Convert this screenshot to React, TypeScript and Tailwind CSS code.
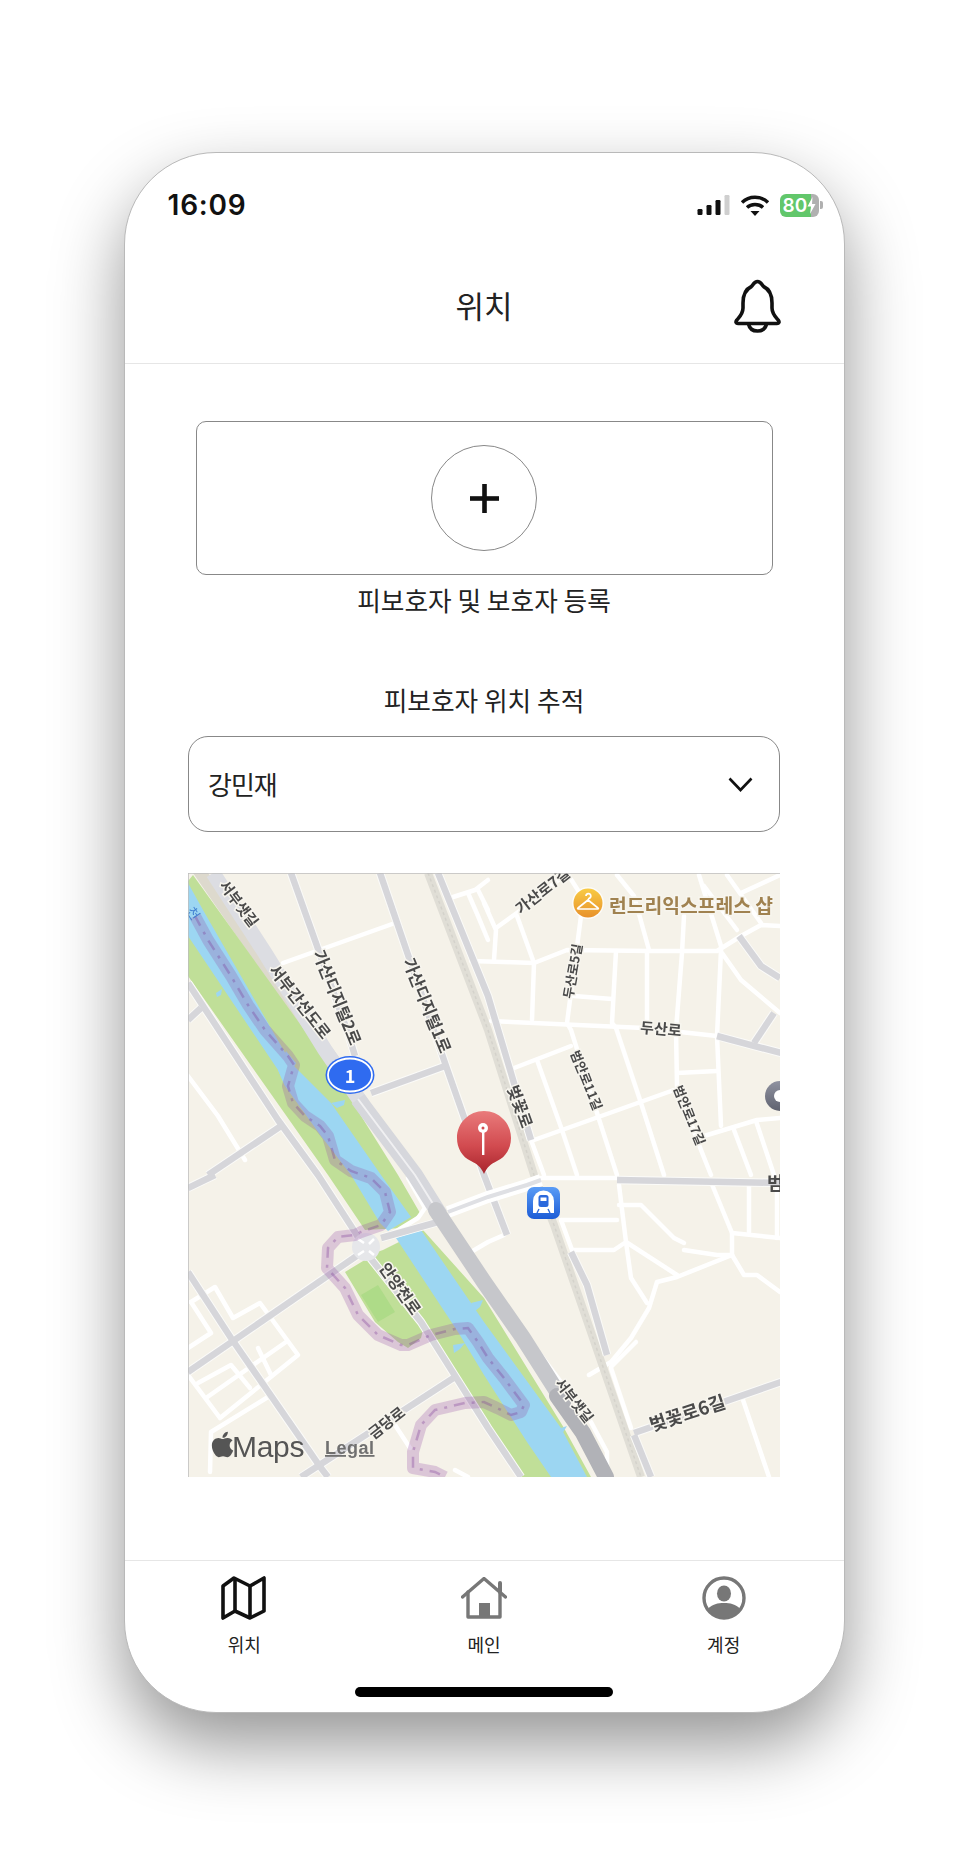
import React from "react";
import { FaApple } from "react-icons/fa";

type P = number[][];
const pts = (p: P) => p.map((a) => a.join(",")).join(" ");

const whites: P[] = [
  [[95,90],[207,50]],
  [[0,203],[30,243],[57,287]],
  [[262,25],[287,17],[300,7]],
  [[280,20],[290,43],[300,67]],
  [[290,17],[300,37]],
  [[283,88],[346,90],[379,77],[463,78],[529,78],[553,63],[573,52],[592,53]],
  [[296,30],[308,57],[306,87]],
  [[308,55],[333,37],[379,0]],
  [[329,43],[346,90],[344,147]],
  [[379,0],[393,22],[393,43],[379,150],[383,157],[409,240],[429,302]],
  [[386,123],[424,126]],
  [[428,78],[424,150],[428,155],[453,230],[476,302]],
  [[459,78],[459,150]],
  [[496,43],[494,80],[488,157],[489,213],[513,277],[523,302]],
  [[533,77],[529,163],[533,253]],
  [[429,2],[446,23],[461,77]],
  [[511,2],[533,73]],
  [[539,2],[573,50]],
  [[516,13],[549,57]],
  [[553,20],[592,2]],
  [[534,80],[553,107],[592,140]],
  [[303,148],[456,155],[529,163]],
  [[321,197],[383,173]],
  [[349,187],[374,257],[389,302]],
  [[346,267],[486,217]],
  [[489,200],[529,198]],
  [[516,263],[569,247],[592,245]],
  [[546,257],[563,302]],
  [[568,248],[586,302]],
  [[283,379],[300,369],[316,362]],
  [[373,347],[429,347]],
  [[373,347],[384,377]],
  [[343,267],[356,302]],
  [[384,377],[426,377],[438,369],[431,312]],
  [[431,332],[453,332],[486,365],[496,370]],
  [[496,377],[529,382],[544,382]],
  [[438,369],[489,402]],
  [[438,369],[443,405],[459,430]],
  [[544,382],[489,404],[469,409],[461,435],[443,465],[423,489],[401,502]],
  [[448,469],[423,494]],
  [[523,309],[544,360],[544,382]],
  [[561,309],[561,359]],
  [[589,312],[589,365]],
  [[544,360],[592,365]],
  [[544,382],[556,402],[569,402],[592,419]],
  [[554,524],[581,604]],
  [[343,469],[403,549],[419,579],[419,595]],
  [[3,429],[27,414],[45,445],[72,430],[110,482],[32,545],[0,502]],
  [[3,429],[23,460],[0,475]],
  [[10,510],[43,492],[62,515]],
  [[18,525],[98,469]],
  [[70,475],[83,502]],
  [[22,599],[23,559],[80,524]],
  [[207,552],[222,575]],
  [[267,597],[280,604]],
  [[197,365],[230,345],[237,335],[220,305]],
  [[423,495],[443,555]],
  [[353,305],[429,305]],
];

const grays: P[] = [
  [[103,0],[160,160],[167,183]],
  [[192,0],[257,190],[277,247],[296,302],[319,362]],
  [[250,0],[300,123],[343,267]],
  [[383,379],[399,412],[419,482]],
  [[446,562],[463,604]],
  [[0,110],[90,247],[130,302],[167,359],[180,382],[233,449],[300,555],[333,604]],
  [[0,147],[13,135]],
  [[20,302],[93,253]],
  [[0,315],[27,302]],
  [[183,220],[257,193]],
  [[0,499],[170,382]],
  [[0,399],[43,465],[133,595],[140,604]],
  [[113,604],[267,504]],
  [[193,365],[250,349]],
  [[429,307],[593,310]],
  [[446,560],[593,509]],
  [[529,163],[593,180]],
  [[566,170],[586,140]],
  [[551,63],[573,93],[592,105]],
];

const route: P = [[7,43],[20,67],[43,103],[60,132],[77,157],[100,183],[106,192],[100,213],[105,230],[117,243],[132,253],[140,263],[147,287],[163,298],[183,305],[197,319],[202,339],[193,352],[173,359],[167,362],[150,364],[140,375],[139,395],[157,415],[170,442],[190,462],[213,472],[220,472],[243,462],[267,456],[280,455],[290,469],[300,485],[316,505],[336,532],[333,539],[323,542],[309,535],[296,529],[277,530],[247,537],[233,552],[225,579],[225,595],[247,599],[257,604]];

const labels: [string, number, number, number, number][] = [
  ["서부샛길", 52, 30, 53, 14.5],
  ["서부간선도로", 113, 128, 52, 16],
  ["가산디지털2로", 150, 124, 68, 16.5],
  ["가산디지털1로", 240, 132, 68, 16.5],
  ["벚꽃로", 333, 233, 70, 16],
  ["가산로7길", 354, 17, -38, 15],
  ["두산로5길", 384, 98, -80, 13],
  ["두산로", 473, 155, 5, 15],
  ["범안로11길", 399, 207, 68, 13],
  ["범안로17길", 502, 242, 68, 13],
  ["안양천로", 213, 415, 55, 16],
  ["금당로", 198, 549, -38, 15],
  ["서부샛길", 387, 527, 52, 14],
  ["벚꽃로6길", 499, 539, -18, 18.5],
];

function MapView() {
  return (
    <svg viewBox="0 0 592 604" className="block w-[592px] h-[604px] blur-[0.6px]">
      <defs>
        <linearGradient id="pin" x1="0" y1="0" x2="0" y2="1">
          <stop offset="0" stopColor="#e97b7b" />
          <stop offset="0.55" stopColor="#d24b50" />
          <stop offset="1" stopColor="#a8242c" />
        </linearGradient>
        <linearGradient id="metro" x1="0" y1="0" x2="0" y2="1">
          <stop offset="0" stopColor="#5a9cf6" />
          <stop offset="1" stopColor="#1c5cd6" />
        </linearGradient>
        <linearGradient id="hanger" x1="0" y1="0" x2="0" y2="1">
          <stop offset="0" stopColor="#f8cb45" />
          <stop offset="1" stopColor="#e8912b" />
        </linearGradient>
        <linearGradient id="poi" x1="0" y1="0" x2="0" y2="1">
          <stop offset="0" stopColor="#8f92a0" />
          <stop offset="1" stopColor="#5f6270" />
        </linearGradient>
      </defs>
      <rect width="592" height="604" fill="#f5f2e9" />
      <polygon points="20,0 5,0 95,130 130,185 155,190" fill="#ddd9cd" />
      <polygon points="0,8 5,2 140,190 210,302 232,340 215,355 177,357 140,302 0,103" fill="#c0df98" />
      <polygon points="195,377 235,357 296,425 376,555 403,604 333,604 300,552 230,445 180,382" fill="#c0df98" />
      <polygon points="157,399 180,385 230,445 237,449 233,465 220,475 210,469 187,449" fill="#c0df98" />
      <polygon points="173,422 190,412 207,439 190,449" fill="#aedb88" />
      <polygon points="0,10 15,37 103,190 143,230 193,302 223,344 200,358 192,350 163,302 133,263 97,213 90,197 0,63" fill="#9cd6f2" />
      <polygon points="208,365 233,357 296,449 373,555 399,604 363,604 339,569 296,502 270,459" fill="#9cd6f2" />
      <polygon points="90,197 98,178 108,190 97,213" fill="#9cd6f2" />
      <polygon points="28,120 34,116 33,122 29,124" fill="#9cd6f2" />
      <polygon points="143,230 157,227 156,232 149,235" fill="#9cd6f2" />
      <polygon points="283,430 295,427 292,434 287,438" fill="#9cd6f2" />
      <polygon points="265,472 277,470 272,476 266,480" fill="#9cd6f2" />
      <polygon points="373,555 379,553 374,561" fill="#9cd6f2" />
      {whites.map((p, i) => (
        <polyline key={i} points={pts(p)} fill="none" stroke="#ffffff" strokeWidth="4.5" strokeLinejoin="round" strokeLinecap="round" />
      ))}
      <polyline points="240,0 300,157 346,302 366,352 453,604" fill="none" stroke="#e0ded6" strokeWidth="8" />
      <polyline points="240,0 300,157 346,302 366,352 453,604" fill="none" stroke="#d4d2cb" strokeWidth="1.5" strokeDasharray="3 3" />
      {grays.map((p, i) => (
        <polyline key={"c" + i} points={pts(p)} fill="none" stroke="#fbfbf9" strokeWidth="8.5" strokeLinejoin="round" />
      ))}
      {grays.map((p, i) => (
        <polyline key={i} points={pts(p)} fill="none" stroke="#d6d6da" strokeWidth="6.5" strokeLinejoin="round" strokeLinecap="butt" />
      ))}
      <polyline points="25,0 77,80 137,177 175,232" fill="none" stroke="#dcdde2" strokeWidth="15" />
      <polyline points="170,226 227,302 252,342" fill="none" stroke="#d6d7dc" strokeWidth="16" />
      <polyline points="170,226 227,302 252,342" fill="none" stroke="#f0f0f2" strokeWidth="2" />
      <polyline points="260,339 300,324 339,312 353,307" fill="none" stroke="#ffffff" strokeWidth="12" />
      <polyline points="260,339 300,324 339,312 353,307" fill="none" stroke="#dfe0e4" strokeWidth="4" />
      <polyline points="248,337 296,409 335,465 370,520" fill="none" stroke="#c6c7cb" strokeWidth="16" strokeLinecap="round" />
      <polyline points="369,523 395,560 418,604" fill="none" stroke="#b1b2b7" strokeWidth="16" strokeLinecap="round" />
      <circle cx="178" cy="374" r="14" fill="#e6e7ea" />
      <path d="M170 366 L176 370 M186 366 L181 371 M170 382 L176 378 M186 382 L181 378" stroke="#ffffff" strokeWidth="2.5" />
      <polyline points={pts(route)} fill="none" stroke="rgba(150,80,165,0.27)" strokeWidth="12" strokeLinejoin="round" />
      <polyline points={pts(route)} fill="none" stroke="rgba(125,55,150,0.32)" strokeWidth="2.5" strokeDasharray="11 7 3 7" />
      {labels.map(([t, x, y, r, s], i) => (
        <text
          key={i}
          transform={`translate(${x} ${y}) rotate(${r})`}
          textAnchor="middle"
          dominantBaseline="central"
          fontSize={s}
          fontWeight={600}
          fill="#4a4a4a"
          stroke="#f7f5ee"
          strokeWidth="3"
          paintOrder="stroke"
        >
          {t}
        </text>
      ))}
      <text transform="translate(6 40) rotate(55)" textAnchor="middle" dominantBaseline="central" fontSize="13" fill="#3f7fd0">천</text>
      <text x="421" y="32" dominantBaseline="central" fontSize="19.3" fontWeight={600} fill="#a08250" stroke="#f7f5ee" strokeWidth="3" paintOrder="stroke">런드리익스프레스 샵</text>
      <text x="579" y="309" dominantBaseline="central" fontSize="18" fontWeight={600} fill="#4a4a4a">범</text>

      <ellipse cx="162" cy="202" rx="24.5" ry="19" fill="#2f6bf0" />
      <ellipse cx="162" cy="202" rx="22" ry="16.5" fill="none" stroke="#ffffff" strokeWidth="1.8" />
      <text x="162" y="202" textAnchor="middle" dominantBaseline="central" fontSize="18" fontWeight={700} fill="#ffffff">1</text>

      <circle cx="400" cy="30" r="16" fill="#fff" opacity="0.7" />
      <circle cx="400" cy="30" r="14.5" fill="url(#hanger)" />
      <path d="M398 23 a2.4 2.4 0 1 1 3 2.4 L400 27 L410 35 Q411 36 409 36 L391 36 Q389 36 390 35 L400 27" fill="none" stroke="#fff" strokeWidth="1.7" strokeLinejoin="round" />

      <circle cx="592" cy="223" r="15" fill="url(#poi)" />
      <circle cx="592" cy="223" r="6" fill="#fff" />

      <rect x="339" y="314" width="33" height="32" rx="7" fill="url(#metro)" />
      <path d="M345 340 L345 328 A10.5 10.5 0 0 1 366 328 L366 340 L361 340 L350 340 Z" fill="#fff" />
      <rect x="350.5" y="322" width="10" height="12" rx="2.5" fill="#2a68dc" />
      <rect x="352.5" y="324.5" width="6" height="3.5" fill="#fff" />
      <path d="M351 336 L349 340 M360 336 L362 340" stroke="#2a68dc" strokeWidth="1.4" />

      <path d="M296 301 C293 294 289 291 283 288 C274 284 269 275 269 265 C269 250 281 238 296 238 C311 238 323 250 323 265 C323 275 318 284 309 288 C303 291 299 294 296 301 Z" fill="url(#pin)" />
      <circle cx="295" cy="255" r="5" fill="#fff" />
      <rect x="294" y="255" width="2.4" height="27" fill="#fff" />
      <circle cx="295" cy="255" r="1.5" fill="#d24b50" />

      <FaApple x={20} y={557} size={29} color="#555555" />
      <text x="44" y="584" fontSize="30" letterSpacing="-0.3" fill="#555555" style={{ fontFamily: "'Liberation Sans', sans-serif" }}>Maps</text>
      <text x="137" y="581" fontSize="18" letterSpacing="0.5" fontWeight={700} fill="#707070" textDecoration="underline" style={{ fontFamily: "'Liberation Sans', sans-serif" }}>Legal</text>
      <line x1="0" y1="0" x2="592" y2="0" stroke="#bdbdbd" strokeWidth="1.5" />
      <line x1="0" y1="0" x2="0" y2="604" stroke="#bdbdbd" strokeWidth="1.5" />
    </svg>
  );
}

function Tab({ label, children }: { label: string; children: React.ReactNode }) {
  return (
    <div className="flex flex-col items-center">
      <div className="h-[42px] flex items-center justify-center">{children}</div>
      <span className="mt-[13px] text-[18px] leading-[24px] text-[#222]">{label}</span>
    </div>
  );
}

export default function App() {
  return (
    <div className="w-[968px] h-[1872px] bg-white pt-[152px] flex justify-center font-['Noto_Sans_CJK_KR','Noto_Sans',sans-serif]">
      <div className="w-[721px] h-[1561px] rounded-[92px] bg-white border border-[#b9b9b9] shadow-[0_32px_70px_rgba(0,0,0,0.42)] flex flex-col overflow-hidden">
        <div className="h-[96px] pt-[37px] pl-[43px] pr-[21px] flex items-start justify-between">
          <span className="text-[28px] leading-[30px] font-semibold tracking-[0.8px] text-[#111] font-['Inter',sans-serif]">16:09</span>
          <div className="flex items-center h-[30px]">
            <svg width="33" height="20" viewBox="0 0 33 20">
              <rect x="0.5" y="14" width="5" height="6" rx="1.2" fill="#111" />
              <rect x="9.5" y="10" width="5" height="10" rx="1.2" fill="#111" />
              <rect x="18.5" y="5" width="5" height="15" rx="1.2" fill="#111" />
              <rect x="27.5" y="0" width="5" height="20" rx="1.2" fill="#cfcfcf" />
            </svg>
            <svg className="ml-[10px]" width="30" height="22" viewBox="0 0 30 22" fill="none">
              <path d="M2 8.5 C9 1.5 21 1.5 28 8.5" stroke="#111" strokeWidth="3.4" />
              <path d="M7 13.5 C11 9.5 19 9.5 23 13.5" stroke="#111" strokeWidth="3.4" />
              <polygon points="10.5,17 19.5,17 15,22" fill="#111" />
            </svg>
            <div className="ml-[10px] w-[39px] h-[23px] rounded-[6px] bg-[linear-gradient(90deg,#62c76b_80%,#b0b0b0_80%)] flex items-center pl-[3px]">
              <span className="text-[19px] leading-[23px] font-semibold text-white font-['Inter',sans-serif]">80</span>
              <svg width="9" height="17" viewBox="0 0 9 17">
                <polygon points="5.5,0 0.5,9.5 4,9.5 3,17 8.5,7 5,7" fill="#fff" />
              </svg>
            </div>
            <div className="ml-[1px] w-[3px] h-[8px] rounded-r-[2px] bg-[#b0b0b0]" />
          </div>
        </div>

        <div className="h-[115px] border-b border-[#e6e6e6] grid grid-cols-[1fr_auto_1fr] items-center px-[63px]">
          <div />
          <span className="text-[31px] leading-[40px] text-[#222] mb-[3px]">위치</span>
          <div className="flex justify-end">
            <svg width="47" height="54" viewBox="0 0 47 54" fill="none" stroke="#111" strokeWidth="3.6" strokeLinejoin="round" strokeLinecap="round">
              <path d="M23.5 2.5 C20.5 2.5 19.5 5 17.5 7.5 C11 10.5 9 17 9 24 L9 29 C9 35 5 38.5 2.5 41.5 C1.5 43 2 44.5 4 44.5 L43 44.5 C45 44.5 45.5 43 44.5 41.5 C42 38.5 38 35 38 29 L38 24 C38 17 36 10.5 29.5 7.5 C27.5 5 26.5 2.5 23.5 2.5 Z" />
              <path d="M14.5 45 C15.5 49.5 19 52 23.5 52 C28 52 31.5 49.5 32.5 45" />
            </svg>
          </div>
        </div>

        <div className="flex-1 flex flex-col items-center pt-[57px]">
          <div className="w-[577px] h-[154px] rounded-[10px] border border-[#888] flex items-center justify-center">
            <div className="w-[106px] h-[106px] rounded-full border border-[#888] flex items-center justify-center">
              <svg width="29" height="29" viewBox="0 0 29 29">
                <rect x="0" y="12.2" width="29" height="4.6" fill="#111" />
                <rect x="12.2" y="0" width="4.6" height="29" fill="#111" />
              </svg>
            </div>
          </div>
          <p className="mt-[7px] text-[25.7px] leading-[36px] text-[#222]">피보호자 및 보호자 등록</p>
          <p className="mt-[64px] text-[25.7px] leading-[36px] text-[#222]">피보호자 위치 추적</p>
          <div className="mt-[18px] w-[592px] h-[96px] rounded-[20px] border border-[#888] flex items-center justify-between pl-[19px] pr-[26px]">
            <span className="text-[26px] leading-[36px] text-[#222] tracking-[-1px]">강민재</span>
            <svg width="25" height="15" viewBox="0 0 25 15" fill="none">
              <polyline points="1.5,1.5 12.5,13 23.5,1.5" stroke="#111" strokeWidth="2.6" />
            </svg>
          </div>
          <div className="mt-[41px] w-[592px] h-[604px] overflow-hidden">
            <MapView />
          </div>
        </div>

        <div className="h-[152px] border-t border-[#e6e6e6] flex flex-col items-center pt-[16px]">
          <div className="w-full grid grid-cols-3">
            <Tab label="위치">
              <svg width="46" height="44" viewBox="0 0 46 44" fill="none" stroke="#111" strokeWidth="3.6" strokeLinejoin="round">
                <path d="M2 10 L13 2 L29 10 L43 2 L43 35 L29 42 L14 35 L2 42 Z" />
                <path d="M14 2 L14 35 M29 10 L29 42" />
              </svg>
            </Tab>
            <Tab label="메인">
              <svg width="46" height="42" viewBox="0 0 46 42" fill="none" stroke="#777" strokeWidth="3.4" strokeLinejoin="round" strokeLinecap="round">
                <path d="M1.5 20 L23 1.5 L44.5 20" />
                <path d="M39 6 L39 15" strokeWidth="4" />
                <path d="M7 15 L7 40 L39 40 L39 15" />
                <rect x="18" y="26" width="11" height="14" fill="#777" stroke="none" />
              </svg>
            </Tab>
            <Tab label="계정">
              <svg width="44" height="44" viewBox="0 0 44 44">
                <circle cx="22" cy="22" r="20" fill="none" stroke="#777" strokeWidth="3.4" />
                <ellipse cx="22" cy="17.5" rx="7" ry="8" fill="#777" />
                <path d="M6 33 C10 28 16 27 22 27 C28 27 34 28 38 33 C34 39 28 42 22 42 C16 42 10 39 6 33 Z" fill="#777" />
              </svg>
            </Tab>
          </div>
          <div className="mt-[31px] w-[258px] h-[10px] rounded-full bg-black" />
        </div>
      </div>
    </div>
  );
}
